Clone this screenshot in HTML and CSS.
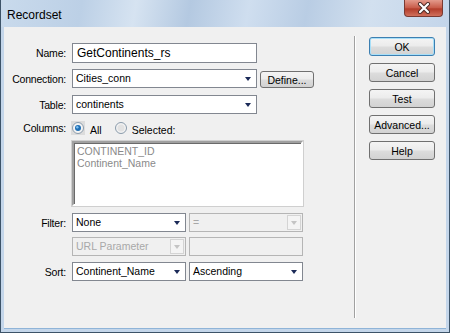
FILE: index.html
```html
<!DOCTYPE html>
<html lang="en">

<head>
    <meta charset="UTF-8">
    <title>Recordset</title>
    <link rel="stylesheet" href="styles.css">
</head>

<body>

    <div class="window">
        <!-- Title bar -->
        <div class="titlebar">
            <span class="title">Recordset</span>
            <div class="close-btn">
                <svg width="16" height="12" viewBox="0 0 16 12">
                    <path d="M4 2 L12 10 M12 2 L4 10" stroke="#4a2a26" stroke-width="4" stroke-linecap="round" />
                    <path d="M4 2 L12 10 M12 2 L4 10" stroke="#ffffff" stroke-width="2.2" stroke-linecap="round" />
                </svg>
            </div>
        </div>

        <div class="content">
            <!-- Left side form -->
            <div class="form">
                <div class="row row-name">
                    <label class="lbl">Name:</label>
                    <div class="textbox wide big">GetContinents_rs</div>
                </div>
                <div class="row row-conn">
                    <label class="lbl">Connection:</label>
                    <div class="select wide">Cities_conn<span class="arrow"></span></div>
                    <button class="btn btn-define">Define...</button>
                </div>
                <div class="row row-table">
                    <label class="lbl">Table:</label>
                    <div class="select wide">continents<span class="arrow"></span></div>
                </div>
                <div class="row row-cols">
                    <label class="lbl">Columns:</label>
                    <span class="radio checked">
                        <svg width="12" height="12" viewBox="0 0 12 12">
                            <circle cx="6" cy="6" r="5.5" fill="#f4f4f4" stroke="#8a9bab" />
                            <circle cx="6" cy="6" r="3" fill="#1f6fb5" />
                            <circle cx="5.3" cy="5.3" r="1.2" fill="#7fc0f0" />
                        </svg>
                    </span>
                    <span class="radio-text">All</span>
                    <span class="radio">
                        <svg width="12" height="12" viewBox="0 0 12 12">
                            <circle cx="6" cy="6" r="5.5" fill="#f2f2f2" stroke="#8a9bab" />
                            <circle cx="6" cy="6" r="3.5" fill="#e2e2e2" />
                        </svg>
                    </span>
                    <span class="radio-text">Selected:</span>
                </div>
                <div class="row row-list">
                    <div class="listbox">
                        <div>CONTINENT_ID</div>
                        <div>Continent_Name</div>
                    </div>
                </div>
                <div class="row row-filter">
                    <label class="lbl">Filter:</label>
                    <div class="select half">None<span class="arrow"></span></div>
                    <div class="select half disabled">=<span class="arrow-box"><span class="arrow"></span></span></div>
                </div>
                <div class="row row-url">
                    <div class="select half disabled">URL Parameter<span class="arrow-box"><span class="arrow"></span></span></div>
                    <div class="textbox half disabled"></div>
                </div>
                <div class="row row-sort">
                    <label class="lbl">Sort:</label>
                    <div class="select half">Continent_Name<span class="arrow"></span></div>
                    <div class="select half">Ascending<span class="arrow"></span></div>
                </div>
            </div>

            <div class="separator"></div>

            <!-- Right side buttons -->
            <div class="buttons">
                <button class="btn btn-side btn-default">OK</button>
                <button class="btn btn-side">Cancel</button>
                <button class="btn btn-side">Test</button>
                <button class="btn btn-side">Advanced...</button>
                <button class="btn btn-side">Help</button>
            </div>
        </div>
    </div>

</body>

</html>
```

FILE: styles.css
```css
body {
    margin: 0;
    padding: 0;
    font-family: "Liberation Sans", Arial, sans-serif;
    font-size: 10.5px;
    color: #000;
    background-color: #f0f0f0;
}

.window {
    width: 450px;
    height: 333px;
    box-sizing: border-box;
    background-color: #c4d6ea;
    border: 1px solid #3d5368;
    border-top: none;
    padding: 0 3px 3px 3px;
    display: flex;
    flex-direction: column;
}

/* Title bar */
.titlebar {
    height: 27px;
    flex-shrink: 0;
    margin: 0 -3px;
    padding: 0 6px 0 6px;
    display: flex;
    align-items: flex-start;
    justify-content: space-between;
    background: linear-gradient(100deg, #c9daec 0%, #bcd0e6 18%, #d6e3f1 30%, #b4c9e1 42%, #cfdeef 55%, #b9cde4 68%, #d2e0ef 82%, #c3d5ea 100%);
}

.title {
    font-size: 12px;
    margin-top: 8px;
}

.close-btn {
    width: 39px;
    height: 17px;
    box-sizing: border-box;
    border: 1px solid #7a3a32;
    border-top: none;
    border-radius: 0 0 4px 4px;
    background: linear-gradient(#e39a8c, #c75a48 50%, #b23c2a 55%, #d0705c);
    display: flex;
    align-items: center;
    justify-content: center;
}

/* Dialog body */
.content {
    flex: 1;
    background-color: #f0f0f0;
    display: flex;
    border-bottom: 1px solid #8fb4d8;
}

.form {
    width: 350px;
    padding-top: 16px;
    display: flex;
    flex-direction: column;
}

.row {
    display: flex;
    align-items: center;
    padding-left: 68px;
}

.row .lbl {
    width: 62px;
    margin-left: -68px;
    margin-right: 6px;
    text-align: right;
    letter-spacing: -0.2px;
}

.row-conn { margin-top: 6px; }
.row-table { margin-top: 7px; }
.row-cols { margin-top: 6px; height: 15px; }
.row-list { margin-top: 6px; }
.row-filter { margin-top: 7px; }
.row-url { margin-top: 5px; }
.row-sort { margin-top: 6px; }

.textbox,
.select {
    position: relative;
    height: 19px;
    box-sizing: border-box;
    border: 1px solid #828790;
    background-color: #fff;
    padding: 0 3px;
    line-height: 17px;
    white-space: nowrap;
}

.wide {
    width: 185px;
}

.half {
    width: 114px;
    margin-right: 3px;
}

.big {
    height: 20px;
    font-size: 12px;
    padding-left: 4px;
    line-height: 18px;
}

.arrow {
    position: absolute;
    right: 5px;
    top: 7px;
    width: 0;
    height: 0;
    border-left: 3px solid transparent;
    border-right: 3px solid transparent;
    border-top: 4px solid #1b2a58;
}

.disabled {
    background-color: #f0f0f0;
    border-color: #b5b5b5;
    color: #a8a8a8;
}

.arrow-box {
    position: absolute;
    right: 1px;
    top: 1px;
    width: 14px;
    height: 15px;
    box-sizing: border-box;
    border: 1px solid #d4d4d4;
    background-color: #f4f4f4;
}

.arrow-box .arrow {
    right: 3px;
    top: 5px;
    border-top-color: #c4c4c4;
}

.radio {
    width: 12px;
    height: 12px;
    display: inline-flex;
}

.radio.checked {
    background-color: #dcdcdc;
    padding: 1px;
    margin-left: -1px;
}

.radio-text {
    margin-left: 5px;
    margin-right: 13px;
    position: relative;
    top: 2px;
}

.listbox {
    width: 231px;
    height: 65px;
    box-sizing: border-box;
    border: 2px solid;
    border-color: #a0a0a0 #fff #fff #a0a0a0;
    box-shadow: inset 1px 1px 0 #6a6a6a;
    background-color: #fff;
    outline: 1px solid #cfcfcf;
    padding: 2px 3px;
    color: #8a8a8a;
    line-height: 12px;
}

/* Buttons */
.btn {
    font-family: "Liberation Sans", Arial, sans-serif;
    font-size: 10.5px;
    color: #000;
    padding: 0;
    height: 17px;
    box-sizing: border-box;
    border: 1px solid #707070;
    border-radius: 3px;
    background: linear-gradient(#f4f4f4, #ececec 45%, #dcdcdc 55%, #d2d2d2);
}

.btn-define {
    width: 54px;
    margin-left: 3px;
    margin-top: 2px;
}

.separator {
    width: 0;
    margin-top: 9px;
    height: 282px;
    border-left: 1px solid #a0a0a0;
    border-right: 1px solid #fff;
}

.buttons {
    margin-left: 13px;
    padding-top: 10px;
    display: flex;
    flex-direction: column;
    gap: 7px;
}

.btn-side {
    width: 66px;
    height: 19px;
}

.btn-default {
    border-color: #3c7fb1;
    box-shadow: inset 0 0 0 1px #a8dff8;
}
```
